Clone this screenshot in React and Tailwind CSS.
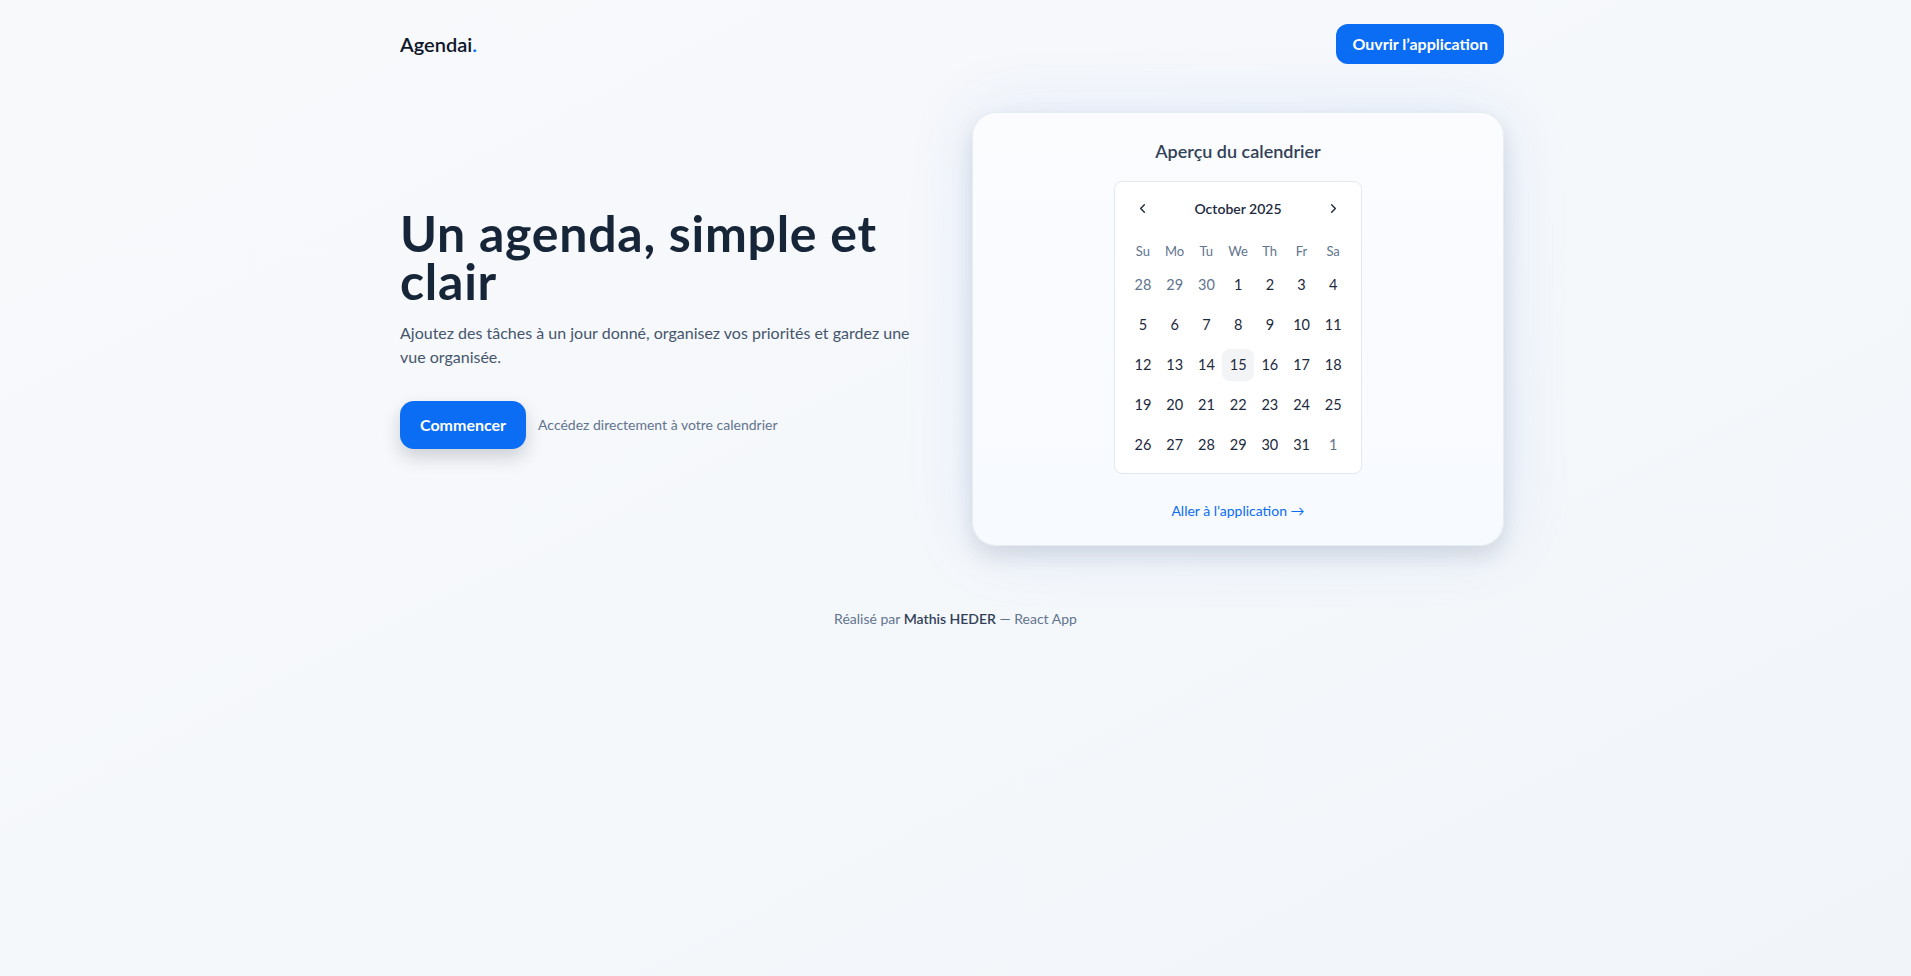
import { ChevronLeft, ChevronRight } from 'lucide-react'

const weekdays = ['Su', 'Mo', 'Tu', 'We', 'Th', 'Fr', 'Sa']

// October 2025, starts on a Wednesday
const weeks = [
  [{ d: 28, out: true }, { d: 29, out: true }, { d: 30, out: true }, { d: 1 }, { d: 2 }, { d: 3 }, { d: 4 }],
  [{ d: 5 }, { d: 6 }, { d: 7 }, { d: 8 }, { d: 9 }, { d: 10 }, { d: 11 }],
  [{ d: 12 }, { d: 13 }, { d: 14 }, { d: 15, today: true }, { d: 16 }, { d: 17 }, { d: 18 }],
  [{ d: 19 }, { d: 20 }, { d: 21 }, { d: 22 }, { d: 23 }, { d: 24 }, { d: 25 }],
  [{ d: 26 }, { d: 27 }, { d: 28 }, { d: 29 }, { d: 30 }, { d: 31 }, { d: 1, out: true }],
]

function MiniCalendar() {
  return (
    <div className="w-[248px] rounded-lg border border-slate-200 bg-white p-3">
      <div className="flex h-7 items-center justify-between px-2 text-slate-800">
        <ChevronLeft size={15} strokeWidth={2.2} />
        <span className="text-[14px] font-semibold">October 2025</span>
        <ChevronRight size={15} strokeWidth={2.2} />
      </div>
      <div className="mt-[21px] grid h-4 grid-cols-7 items-center text-center text-[13px] leading-4 text-slate-500">
        {weekdays.map((w) => (
          <span key={w}>{w}</span>
        ))}
      </div>
      <div className="flex flex-col gap-2 pt-[10px]">
        {weeks.map((week, i) => (
          <div key={i} className="grid grid-cols-7">
            {week.map((day, j) => (
              <div
                key={j}
                className={
                  'flex h-8 w-8 items-center justify-center rounded-lg text-[14.5px] ' +
                  (day.out ? 'text-slate-500 ' : 'text-slate-800 ') +
                  (day.today ? 'bg-gray-100' : '')
                }
              >
                {day.d}
              </div>
            ))}
          </div>
        ))}
      </div>
    </div>
  )
}

export default function App() {
  return (
    <div className="min-h-screen bg-gradient-to-br from-[#f8f9fb] via-[#f5f8fb] to-[#f1f5f9] font-['Lato',sans-serif] text-slate-800">
      <header className="ml-[400px] flex w-[1104px] items-center justify-between py-6">
        <span className="text-xl font-semibold text-slate-900">
          Agendai<span className="text-[#0b6cf4]">.</span>
        </span>
        <button className="h-10 rounded-xl bg-[#0b6cf4] px-4 text-base font-bold text-white">
          Ouvrir l’application
        </button>
      </header>

      <main className="ml-[400px] grid w-[1104px] grid-cols-2 items-center gap-10 py-6">
        <section>
          <h1 className="text-[50px] leading-[48px] font-bold tracking-[0.015em] text-[#172538]">
            Un agenda, simple et clair
          </h1>
          <p className="mt-4 text-base leading-6 text-slate-600">
            Ajoutez des tâches à un jour donné, organisez vos priorités et gardez une vue organisée.
          </p>
          <div className="mt-8 flex items-center gap-3">
            <button className="h-12 rounded-[14px] bg-[#0b6cf4] px-5 text-base font-bold text-white shadow-[0_8px_18px_rgba(15,23,42,0.18)]">
              Commencer
            </button>
            <span className="text-sm text-slate-500">Accédez directement à votre calendrier</span>
          </div>
        </section>

        <section className="flex flex-col items-center rounded-3xl border border-slate-200/80 bg-gradient-to-b from-[#fbfcfe] to-[#f7faff] p-6 shadow-[0_0_70px_rgba(37,99,235,0.10),0_10px_22px_rgba(15,23,42,0.12)]">
          <h2 className="text-lg leading-7 font-semibold text-slate-700">Aperçu du calendrier</h2>
          <div className="mt-4">
            <MiniCalendar />
          </div>
          <a className="mt-[27px] text-sm leading-5 text-[#0b6cf4]">Aller à l’application →</a>
        </section>
      </main>

      <footer className="pt-[39px] text-center text-sm text-slate-500">
        Réalisé par <span className="font-semibold text-slate-700">Mathis HEDER</span> — React App
      </footer>
    </div>
  )
}
